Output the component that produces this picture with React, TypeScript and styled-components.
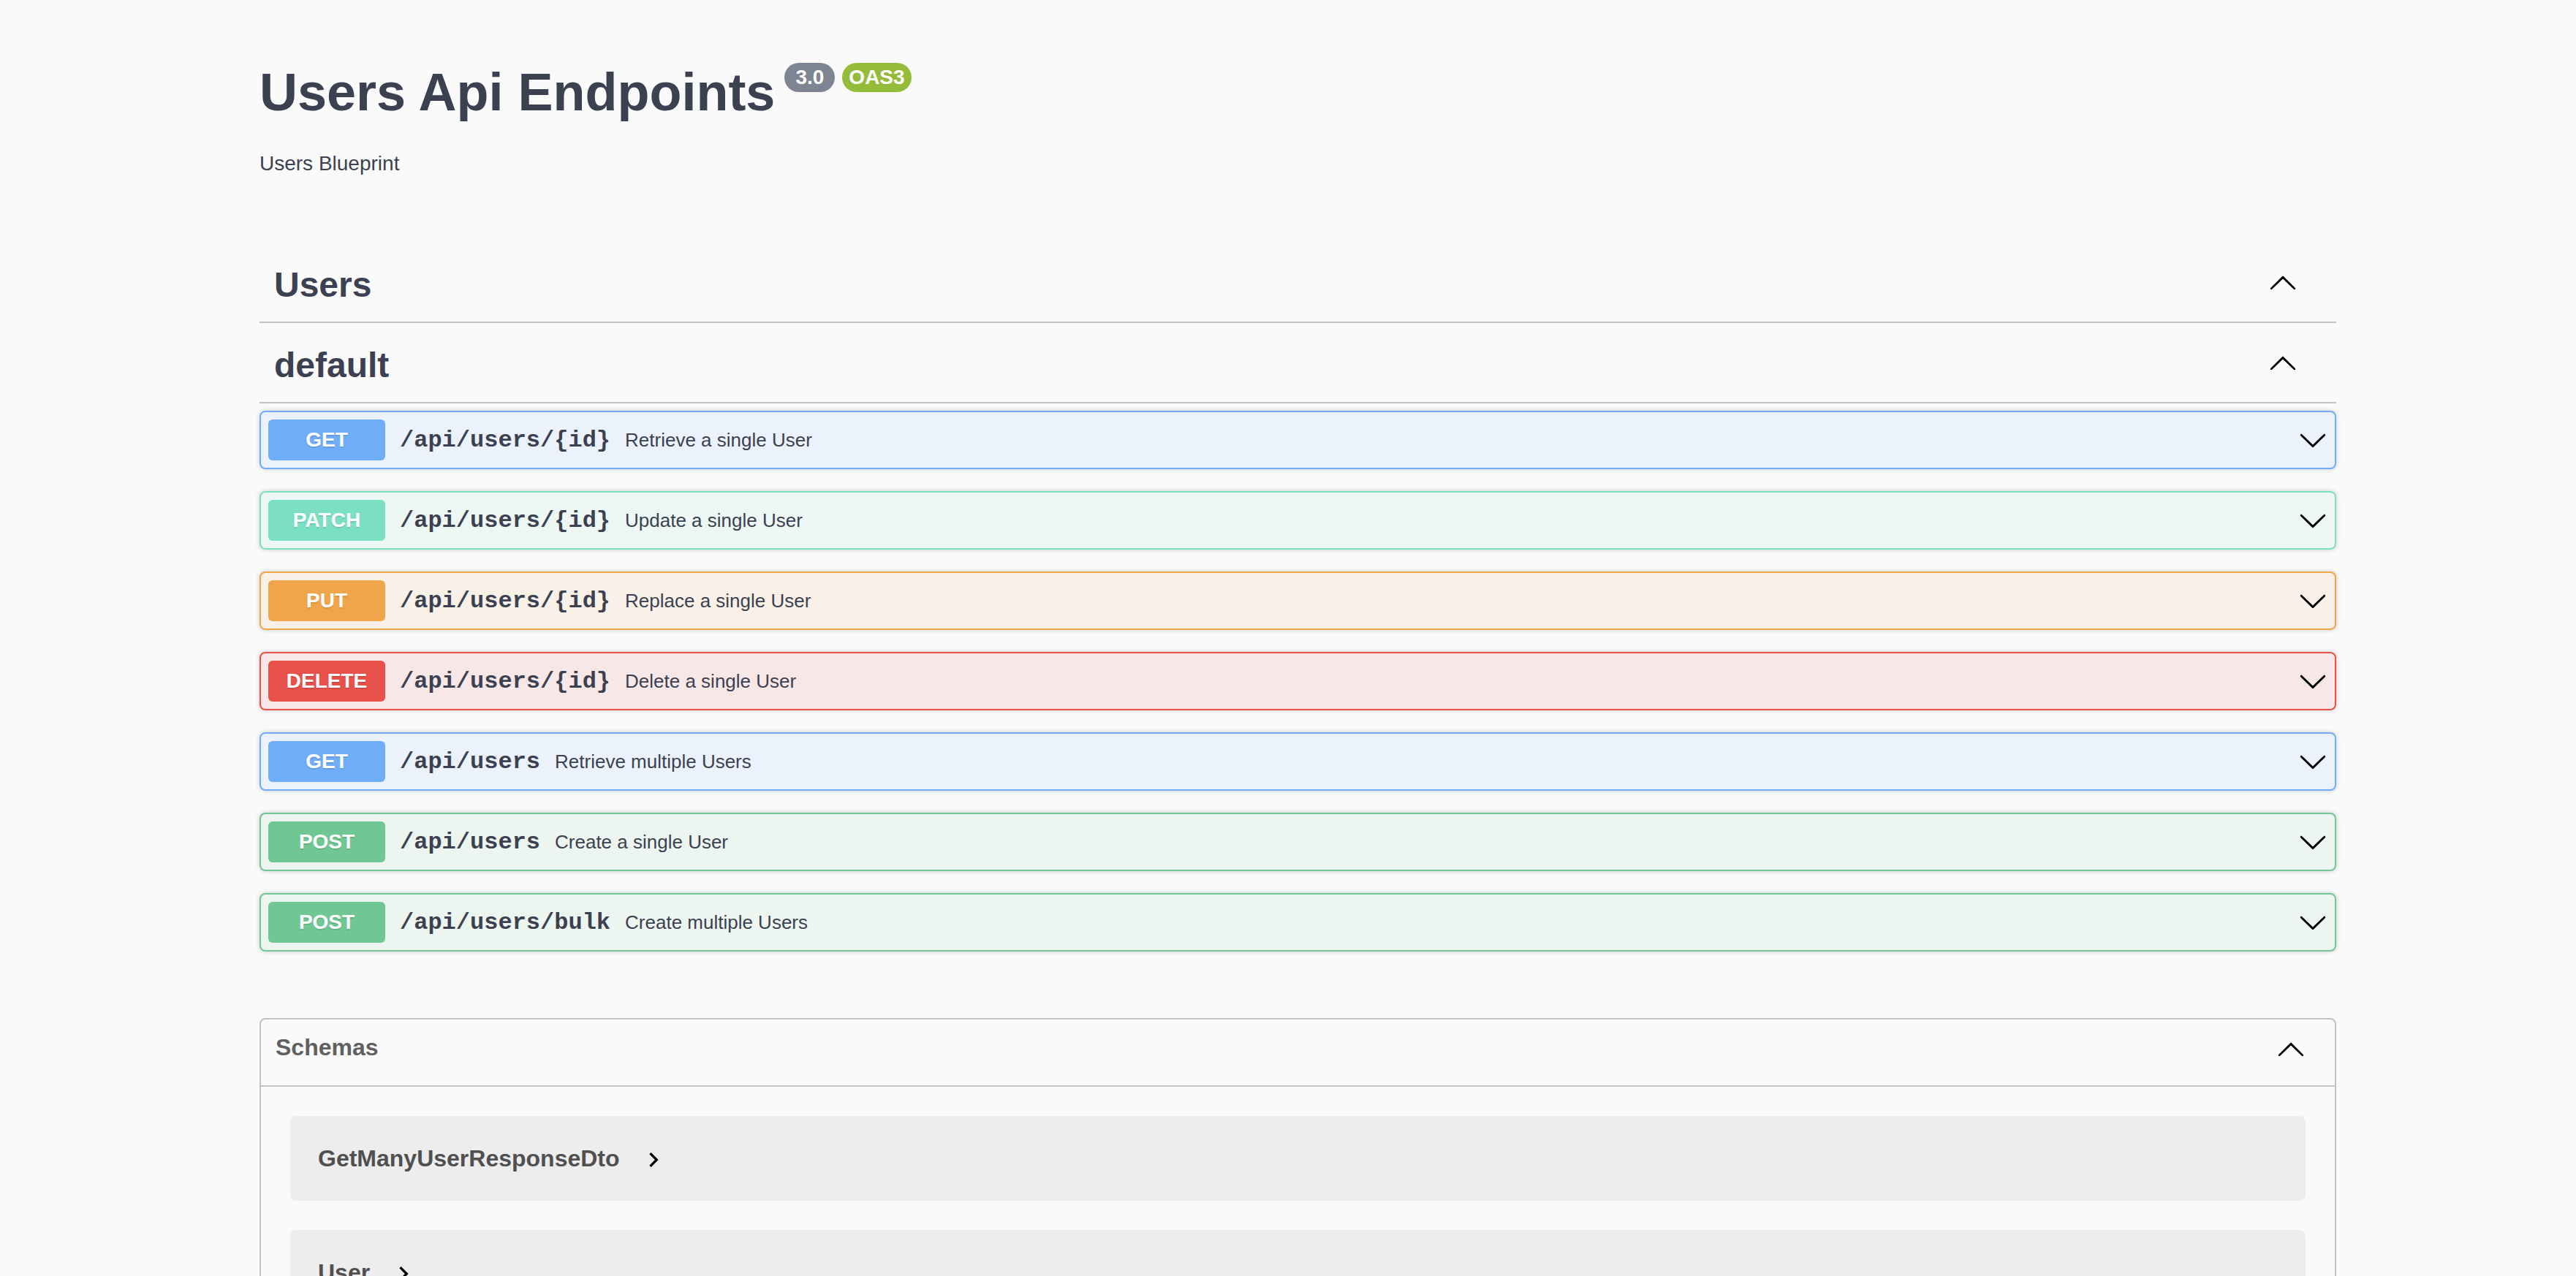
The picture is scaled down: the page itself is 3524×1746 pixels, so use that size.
import React from "react";
import styled, { createGlobalStyle } from "styled-components";

const GlobalStyle = createGlobalStyle`
  html, body { margin: 0; padding: 0; }
  body {
    background: #fafafa;
    color: #3b4151;
    font-family: "Liberation Sans", Arial, Helvetica, sans-serif;
  }
`;

const Wrapper = styled.div`
  width: 2841px;
  margin: 0 0 0 355px;
  padding-bottom: 200px;
`;

const Info = styled.header`
  padding-top: 85px;
  margin-bottom: 98px;
`;

const Title = styled.h2`
  display: flex;
  align-items: flex-start;
  margin: 0;
  font-size: 72px;
  line-height: 82px;
  font-weight: 700;
  color: #3b4151;
`;

const Badge = styled.small<{ $bg: string; $pad: number; $ml: number }>`
  display: inline-flex;
  align-items: center;
  justify-content: center;
  height: 40px;
  margin: 1px 0 0 ${(p) => p.$ml}px;
  padding: 0 ${(p) => p.$pad}px;
  border-radius: 40px;
  background: ${(p) => p.$bg};
  color: #fff;
  font-size: 28px;
  line-height: 40px;
  font-weight: 700;
`;

const Description = styled.p`
  margin: 37px 0 0;
  font-size: 28px;
  line-height: 40px;
  color: #3b4151;
`;

const TagHeader = styled.div`
  box-sizing: border-box;
  height: 100px;
  display: flex;
  align-items: center;
  justify-content: space-between;
  padding: 0 53px 0 20px;
  margin-bottom: 10px;
  border-bottom: 2px solid rgba(59, 65, 81, 0.3);
`;

const TagName = styled.h3`
  margin: 0 0 4px;
  font-size: 48px;
  font-weight: 700;
  color: #3b4151;
`;

const Chevron = styled.svg`
  width: 40px;
  height: 40px;
  flex: none;
  margin-top: -10px;
  fill: #000;
`;

const OpList = styled.div`
  display: flex;
  flex-direction: column;
  gap: 30px;
`;

type MethodColors = { main: string; bg: string };

const METHODS: Record<string, MethodColors> = {
  GET: { main: "#70adf8", bg: "#ebf2fb" },
  PATCH: { main: "#7bdfc3", bg: "#edf7f4" },
  PUT: { main: "#efa54a", bg: "#f9f0e8" },
  DELETE: { main: "#e8504a", bg: "#f8e7e7" },
  POST: { main: "#70c794", bg: "#ecf5ef" },
};

const Opblock = styled.div<{ $c: MethodColors }>`
  box-sizing: border-box;
  height: 80px;
  display: flex;
  align-items: center;
  padding: 0 10px;
  border: 2px solid ${(p) => p.$c.main};
  border-radius: 8px;
  background: ${(p) => p.$c.bg};
  box-shadow: 0 0 6px rgba(0, 0, 0, 0.19);
`;

const Method = styled.span<{ $c: MethodColors }>`
  flex: none;
  width: 160px;
  height: 56px;
  display: flex;
  align-items: center;
  justify-content: center;
  border-radius: 6px;
  background: ${(p) => p.$c.main};
  color: #fff;
  font-size: 28px;
  font-weight: 700;
  text-shadow: 0 2px 0 rgba(0, 0, 0, 0.1);
`;

const Path = styled.span`
  padding: 0 20px;
  font-family: "Liberation Mono", "Courier New", monospace;
  font-weight: 700;
  font-size: 32px;
  color: #3b4151;
`;

const Summary = styled.span`
  flex: 1;
  font-size: 26px;
  color: #3b4151;
`;

const OpChevron = styled.svg`
  width: 40px;
  height: 40px;
  flex: none;
  fill: #000;
`;

const Models = styled.section`
  margin-top: 91px;
  border: 2px solid rgba(59, 65, 81, 0.3);
  border-radius: 8px;
`;

const ModelsHeader = styled.h4`
  box-sizing: border-box;
  height: 92px;
  margin: 0;
  display: flex;
  align-items: center;
  justify-content: space-between;
  padding: 0 40px 0 20px;
  border-bottom: 2px solid rgba(59, 65, 81, 0.3);
  font-size: 32px;
  font-weight: 700;
  color: #606060;
`;

const ModelsHeading = styled.span`
  padding-bottom: 14px;
`;

const ModelsBody = styled.div`
  display: flex;
  flex-direction: column;
  gap: 40px;
  padding: 40px;
`;

const ModelContainer = styled.div`
  height: 116px;
  display: flex;
  align-items: center;
  padding: 0 38px;
  border-radius: 8px;
  background: rgba(0, 0, 0, 0.05);
`;

const ModelTitle = styled.span`
  font-size: 32px;
  font-weight: 700;
  color: #505050;
`;

const ModelToggle = styled.svg`
  width: 40px;
  height: 40px;
  margin: 3px 0 0 26px;
  fill: #000;
`;

const UP =
  "M17.418 14.908C17.69 15.176 18.127 15.176 18.397 14.908C18.667 14.64 18.668 14.207 18.397 13.939L10.489 6.109C10.219 5.841 9.782 5.841 9.51 6.109L1.602 13.939C1.332 14.207 1.332 14.64 1.602 14.908C1.873 15.176 2.311 15.176 2.581 14.908L10 7.767Z";
const DOWN =
  "M17.418 6.109c.272-.268.709-.268.979 0s.271.701 0 .969l-7.908 7.83c-.27.268-.707.268-.979 0l-7.908-7.83c-.27-.268-.27-.701 0-.969.271-.268.709-.268.979 0L10 13.25l7.418-7.141z";

const ArrowUp = () => (
  <Chevron viewBox="0 0 20 20">
    <path d={UP} />
  </Chevron>
);

const ops = [
  { m: "GET", p: "/api/users/{id}", s: "Retrieve a single User" },
  { m: "PATCH", p: "/api/users/{id}", s: "Update a single User" },
  { m: "PUT", p: "/api/users/{id}", s: "Replace a single User" },
  { m: "DELETE", p: "/api/users/{id}", s: "Delete a single User" },
  { m: "GET", p: "/api/users", s: "Retrieve multiple Users" },
  { m: "POST", p: "/api/users", s: "Create a single User" },
  { m: "POST", p: "/api/users/bulk", s: "Create multiple Users" },
];

const models = ["GetManyUserResponseDto", "User"];

export default function App() {
  return (
    <>
      <GlobalStyle />
      <Wrapper>
        <Info>
          <Title>
            <span>Users Api Endpoints</span>
            <Badge $bg="#7d8492" $pad={15} $ml={13}>3.0</Badge>
            <Badge $bg="#94bc3a" $pad={9} $ml={10}>OAS3</Badge>
          </Title>
          <Description>Users Blueprint</Description>
        </Info>

        <TagHeader>
          <TagName>Users</TagName>
          <ArrowUp />
        </TagHeader>

        <TagHeader>
          <TagName>default</TagName>
          <ArrowUp />
        </TagHeader>

        <OpList>
          {ops.map((o, i) => {
            const c = METHODS[o.m];
            return (
              <Opblock key={i} $c={c}>
                <Method $c={c}>{o.m}</Method>
                <Path>{o.p}</Path>
                <Summary>{o.s}</Summary>
                <OpChevron viewBox="0 0 20 20">
                  <path d={DOWN} />
                </OpChevron>
              </Opblock>
            );
          })}
        </OpList>

        <Models>
          <ModelsHeader>
            <ModelsHeading>Schemas</ModelsHeading>
            <ArrowUp />
          </ModelsHeader>
          <ModelsBody>
            {models.map((m) => (
              <ModelContainer key={m}>
                <ModelTitle>{m}</ModelTitle>
                <ModelToggle viewBox="0 0 24 24">
                  <path d="M10 6 8.59 7.41 13.17 12l-4.58 4.59L10 18l6-6z" />
                </ModelToggle>
              </ModelContainer>
            ))}
          </ModelsBody>
        </Models>
      </Wrapper>
    </>
  );
}
